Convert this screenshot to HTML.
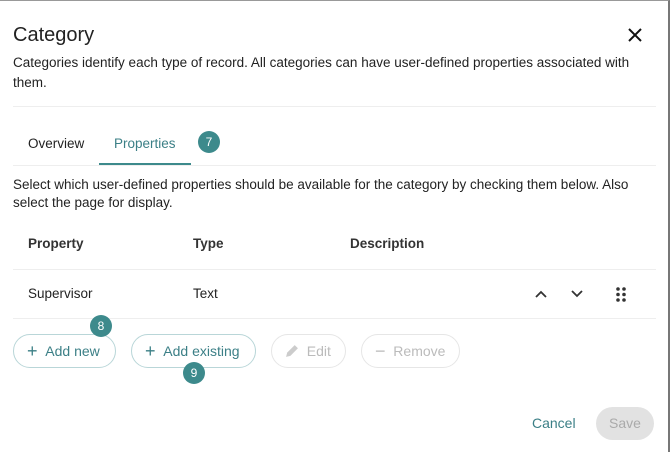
<!DOCTYPE html>
<html><head><style>
*{box-sizing:border-box;margin:0;padding:0}
body{width:670px;height:452px;background:#fff;font-family:"Liberation Sans",sans-serif;color:#222;position:relative;overflow:hidden;border-top:1px solid #999;border-right:2px solid #777}
.a{position:absolute;white-space:nowrap}
.hr{position:absolute;left:13px;width:643px;height:1px;background:#eee}
.badge{position:absolute;width:22px;height:22px;border-radius:50%;background:#3d8a8c;color:#fff;font-size:12px;text-align:center;line-height:22px}
.btn{position:absolute;top:333px;height:34px;border:1px solid #b9d6d8;border-radius:17px;font-size:14px;color:#3b7f86;line-height:32px;padding-left:13px}
.btn b{font-weight:normal;font-size:18px;vertical-align:-1px}
.dis{border-color:#e6e6e6;color:#bbb}
.t{font-size:13.5px;color:#222}
</style></head><body>
<div class="a" style="left:13px;top:23px;font-size:20px;color:#222">Category</div>
<svg class="a" style="left:628px;top:27px" width="14" height="14" viewBox="0 0 14 14"><path d="M1 1L13 13M13 1L1 13" stroke="#111" stroke-width="2"/></svg>
<div class="a t" style="left:13px;top:54px">Categories identify each type of record. All categories can have user-defined properties associated with</div>
<div class="a t" style="left:13px;top:74px">them.</div>
<div class="hr" style="top:105px"></div>
<div class="a t" style="left:28px;top:135px">Overview</div>
<div class="a t" style="left:114px;top:135px;color:#3b7f86">Properties</div>
<div class="a" style="left:99px;top:162px;width:92px;height:2px;background:#3d8a8c"></div>
<div class="badge" style="left:198px;top:130px">7</div>
<div class="hr" style="top:164px"></div>
<div class="a t" style="left:13px;top:176px">Select which user-defined properties should be available for the category by checking them below. Also</div>
<div class="a t" style="left:13px;top:194px">select the page for display.</div>
<div class="a t" style="left:28px;top:235px;font-weight:bold;color:#333">Property</div>
<div class="a t" style="left:193px;top:235px;font-weight:bold;color:#333">Type</div>
<div class="a t" style="left:350px;top:235px;font-weight:bold;color:#333">Description</div>
<div class="hr" style="top:268px"></div>
<div class="a t" style="left:28px;top:285px">Supervisor</div>
<div class="a t" style="left:193px;top:285px">Text</div>
<svg class="a" style="left:535px;top:289px" width="12" height="8"><path d="M1 7L6 2L11 7" fill="none" stroke="#333" stroke-width="1.8"/></svg>
<svg class="a" style="left:571px;top:289px" width="12" height="8"><path d="M1 1L6 6L11 1" fill="none" stroke="#333" stroke-width="1.8"/></svg>
<svg class="a" style="left:616px;top:286px" width="10" height="15"><g fill="#333"><circle cx="2" cy="2" r="1.8"/><circle cx="8" cy="2" r="1.8"/><circle cx="2" cy="7.5" r="1.8"/><circle cx="8" cy="7.5" r="1.8"/><circle cx="2" cy="13" r="1.8"/><circle cx="8" cy="13" r="1.8"/></g></svg>
<div class="hr" style="top:317px"></div>
<div class="btn" style="left:13px;width:103px"><b>+</b>&nbsp;&nbsp;Add new</div>
<div class="btn" style="left:131px;width:125px"><b>+</b>&nbsp;&nbsp;Add existing</div>
<div class="btn dis" style="left:271px;width:75px"><svg width="14" height="14" style="vertical-align:-2px" viewBox="0 0 13 13"><path d="M1 12L2 8L9 1L12 4L5 11Z" fill="#ccc"/></svg>&nbsp;&nbsp;Edit</div>
<div class="btn dis" style="left:361px;width:99px"><b>&minus;</b>&nbsp;&nbsp;Remove</div>
<div class="badge" style="left:90px;top:314px">8</div>
<div class="badge" style="left:183px;top:361px">9</div>
<div class="a" style="left:532px;top:414px;font-size:14px;color:#3b7f86">Cancel</div>
<div class="a" style="left:596px;top:406px;width:58px;height:33px;border-radius:17px;background:#e2e2e2;color:#aaa;font-size:14px;text-align:center;line-height:33px">Save</div>
</body></html>
